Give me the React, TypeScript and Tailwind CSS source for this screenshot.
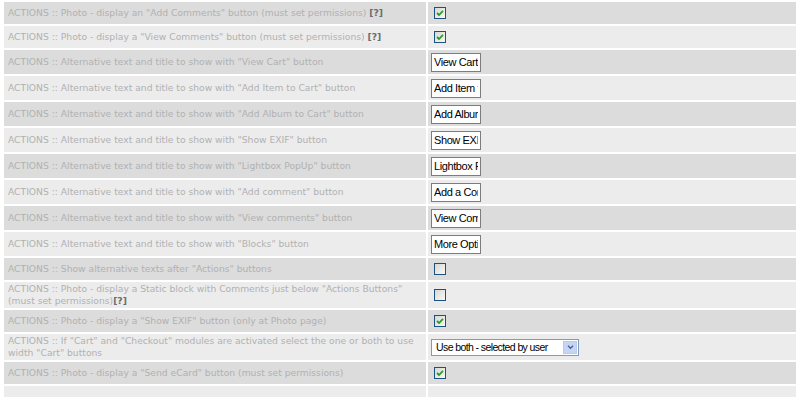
import React from "react";

type Row =
  | { label: React.ReactNode; kind: "check"; checked: boolean; h?: string }
  | { label: React.ReactNode; kind: "text"; value: string }
  | { label: React.ReactNode; kind: "select"; value: string };

const Help = () => <b className="text-[#6b6b6b]">[?]</b>;

const rows: Row[] = [
  { label: <>ACTIONS :: Photo - display an "Add Comments" button (must set permissions) <Help /></>, kind: "check", checked: true },
  { label: <>ACTIONS :: Photo - display a "View Comments" button (must set permissions) <Help /></>, kind: "check", checked: true },
  { label: 'ACTIONS :: Alternative text and title to show with "View Cart" button', kind: "text", value: "View Cart" },
  { label: 'ACTIONS :: Alternative text and title to show with "Add Item to Cart" button', kind: "text", value: "Add Item to Cart" },
  { label: 'ACTIONS :: Alternative text and title to show with "Add Album to Cart" button', kind: "text", value: "Add Album to Cart" },
  { label: 'ACTIONS :: Alternative text and title to show with "Show EXIF" button', kind: "text", value: "Show EXIF" },
  { label: 'ACTIONS :: Alternative text and title to show with "Lightbox PopUp" button', kind: "text", value: "Lightbox PopUp" },
  { label: 'ACTIONS :: Alternative text and title to show with "Add comment" button', kind: "text", value: "Add a Comment" },
  { label: 'ACTIONS :: Alternative text and title to show with "View comments" button', kind: "text", value: "View Comments" },
  { label: 'ACTIONS :: Alternative text and title to show with "Blocks" button', kind: "text", value: "More Options" },
  { label: 'ACTIONS :: Show alternative texts after "Actions" buttons', kind: "check", checked: false },
  {
    label: (
      <>
        ACTIONS :: Photo - display a Static block with Comments just below "Actions Buttons"
        <br />
        (must set permissions)<Help />
      </>
    ),
    kind: "check",
    checked: false,
    h: "h-[26px]",
  },
  { label: 'ACTIONS :: Photo - display a "Show EXIF" button (only at Photo page)', kind: "check", checked: true },
  {
    label: (
      <>
        ACTIONS :: If "Cart" and "Checkout" modules are activated select the one or both to use
        <br />
        width "Cart" buttons
      </>
    ),
    kind: "select",
    value: "Use both - selected by user",
  },
  { label: 'ACTIONS :: Photo - display a "Send eCard" button (must set permissions)', kind: "check", checked: true },
  { label: "", kind: "check", checked: false },
];

function Checkbox({ checked }: { checked: boolean }) {
  return (
    <span className="inline-block w-[12px] h-[12px] border border-[#1c5180] bg-gradient-to-br from-[#d8d8d3] to-[#f8f8f6] align-middle">
      {checked && (
        <svg viewBox="0 0 10 10" className="w-[10px] h-[10px]">
          <path d="M2 5 L4 7 L8 2.8" fill="none" stroke="#21a121" strokeWidth="1.8" />
        </svg>
      )}
    </span>
  );
}

export default function App() {
  return (
    <div className="bg-white w-[800px] h-[397px] overflow-hidden px-[2px]">
      <table className="w-full border-separate border-spacing-[2px] font-['DejaVu_Sans',sans-serif]">
        <tbody>
          {rows.map((r, i) => {
            const bg = i % 2 === 0 ? "bg-[#dcdcdc]" : "bg-[#ececec]";
            const h = r.kind === "check" ? r.h ?? "h-[22px]" : r.kind === "text" ? "h-[24px]" : "h-[26px]";
            const last = i === rows.length - 1;
            return (
              <tr key={i} className={h}>
                <td className={`${bg} w-[422px] p-0 pl-[4px] text-[9.2px] leading-[12px] text-[#b1b1b1] align-middle`}>
                  {r.label}
                </td>
                <td className={`${bg} p-0 align-middle`}>
                  {!last && r.kind === "check" && (
                    <div className="pl-[6px] flex items-center">
                      <Checkbox checked={r.checked} />
                    </div>
                  )}
                  {r.kind === "text" && (
                    <div className="pl-[3px] flex items-center">
                      <input
                        readOnly
                        value={r.value}
                        className="w-[50px] h-[19px] border border-[#7d7d7d] bg-white px-[2px] text-[11px] tracking-[-0.4px] text-black font-['Liberation_Sans',sans-serif] outline-none"
                      />
                    </div>
                  )}
                  {r.kind === "select" && (
                    <div className="pl-[3px] flex items-center">
                      <div className="w-[148px] h-[17px] border border-[#7f9db9] bg-white flex items-center justify-between pl-[4px] pr-[1px]">
                        <span className="text-[10.5px] tracking-[-0.6px] text-black font-['Liberation_Sans',sans-serif] leading-none">
                          {r.value}
                        </span>
                        <span className="w-[14px] h-[13px] border border-[#b9c9ef] bg-[#c6d5f7] flex items-center justify-center">
                          <svg viewBox="0 0 8 6" className="w-[7px] h-[5px]">
                            <path d="M1 1 L4 4 L7 1" fill="none" stroke="#4d6185" strokeWidth="1.6" />
                          </svg>
                        </span>
                      </div>
                    </div>
                  )}
                </td>
              </tr>
            );
          })}
        </tbody>
      </table>
    </div>
  );
}
